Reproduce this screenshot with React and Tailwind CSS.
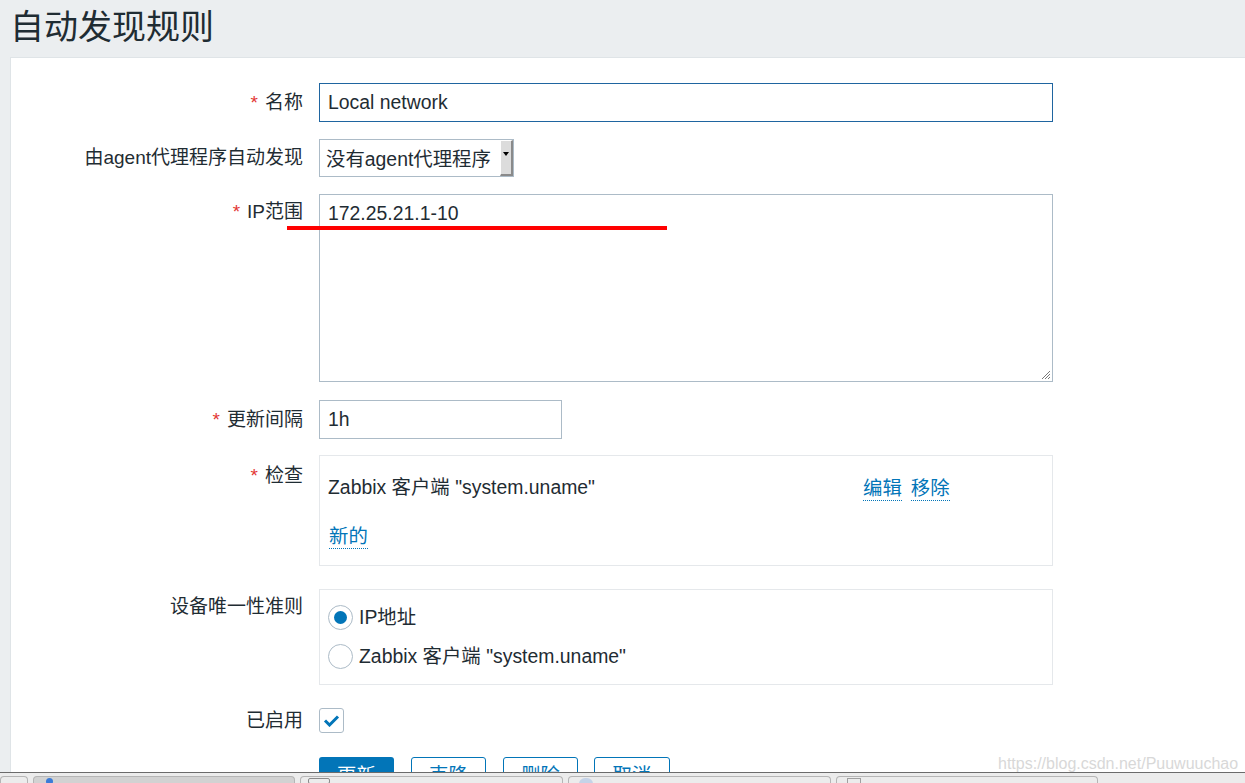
import React from "react";

const FONT = { fontFamily: '"Liberation Sans", "Noto Sans CJK SC", sans-serif' };

function Label({ req, children, className = "" }) {
  return (
    <div className={`w-[292px] shrink-0 text-right text-[19px] leading-[22px] text-[#1f2c33] ${className}`}>
      {req && <span className="text-[#e33734] mr-[7px]">*</span>}
      {children}
    </div>
  );
}

function Link({ children }) {
  return (
    <span className="text-[#0275b8] border-b border-dotted border-[#0275b8] leading-[24px] inline-block">
      {children}
    </span>
  );
}

function Radio({ checked }) {
  return (
    <span className="w-[25px] h-[25px] rounded-full border border-[#acbbc7] bg-white flex items-center justify-center shrink-0">
      {checked && <span className="w-[13px] h-[13px] rounded-full bg-[#0275b8]" />}
    </span>
  );
}

function Tab({ w, active, children }) {
  return (
    <div
      className={`h-[8px] mt-[3px] rounded-t-[4px] border border-b-0 border-[#b5b5b5] ${active ? "bg-[#d2d2d2]" : "bg-[#ececec]"} ${w}`}
    >
      {children}
    </div>
  );
}

export default function App() {
  return (
    <div className="w-[1245px] h-[783px] overflow-hidden flex flex-col bg-[#ebeef0] relative" style={FONT}>
      <div className="h-[772px] overflow-hidden flex flex-col shrink-0">
        <div className="h-[57px] shrink-0 pl-[10px] flex items-start pt-[6px]">
          <h1 className="text-[34px] leading-[42px] text-[#1f2c33] font-normal">自动发现规则</h1>
        </div>
        <div className="ml-[10px] flex-1 bg-white border-l border-t border-[#dfe4e7] pt-[25px] relative text-[19.4px]">
          {/* Name */}
          <div className="flex items-center gap-[16px]">
            <Label req>名称</Label>
            <div className="w-[734px] h-[39px] border border-[#1f65a0] flex items-center pl-[8px] text-[#1f2c33]">
              Local network
            </div>
          </div>

          {/* Proxy */}
          <div className="flex items-center gap-[16px] mt-[17px]">
            <Label>由agent代理程序自动发现</Label>
            <div className="w-[195px] h-[38px] border border-[#acbbc7] flex items-stretch text-[#1f2c33]">
              <div className="flex-1 flex items-center pl-[6px] pt-[4px]">没有agent代理程序</div>
              <div className="w-[13px] h-[36px] bg-[#dcdcdc] border-l border-t border-white border-r-[2px] border-r-[#8a8a8a] border-b-[2px] border-b-[#8a8a8a] flex justify-center pt-[11px]">
                <svg width="6" height="4" viewBox="0 0 6 4">
                  <path d="M0 0 L6 0 L3 4 Z" fill="#000" />
                </svg>
              </div>
            </div>
          </div>

          {/* IP range */}
          <div className="flex items-start gap-[16px] mt-[17px]">
            <Label req className="pt-[7px]">IP范围</Label>
            <div className="w-[734px] h-[188px] border border-[#acbbc7] pl-[8px] pt-[7px] leading-[22px] text-[#1f2c33] relative">
              172.25.21.1-10
              <svg className="absolute right-[1px] bottom-[1px]" width="11" height="11" viewBox="0 0 11 11">
                <path d="M10 2 L2 10 M10 5 L5 10 M10 8 L8 10" stroke="#7a7a7a" strokeWidth="1" />
              </svg>
            </div>
          </div>

          {/* Update interval */}
          <div className="flex items-center gap-[16px] mt-[18px]">
            <Label req>更新间隔</Label>
            <div className="w-[243px] h-[39px] border border-[#acbbc7] flex items-center pl-[8px] text-[#1f2c33]">
              1h
            </div>
          </div>

          {/* Checks */}
          <div className="flex items-start gap-[16px] mt-[16px]">
            <Label req className="pt-[10px]">检查</Label>
            <div className="w-[734px] h-[111px] border border-[#e5e8eb] pl-[8px] pt-[21px] text-[#1f2c33]">
              <div className="flex items-center h-[22px]">
                <span className="w-[535px]">Zabbix 客户端 "system.uname"</span>
                <span className="mt-[2px]"><Link>编辑</Link></span>
                <span className="ml-[9px] mt-[2px]"><Link>移除</Link></span>
              </div>
              <div className="mt-[23px] pl-[1px]">
                <Link>新的</Link>
              </div>
            </div>
          </div>

          {/* Device uniqueness */}
          <div className="flex items-start gap-[16px] mt-[23px]">
            <Label className="pt-[7px]">设备唯一性准则</Label>
            <div className="w-[734px] h-[96px] border border-[#e5e8eb] pl-[8px] pt-[15px] text-[#1f2c33]">
              <div className="flex items-center gap-[6px] h-[25px]">
                <Radio checked />
                <span>IP地址</span>
              </div>
              <div className="flex items-center gap-[6px] h-[25px] mt-[14px]">
                <Radio />
                <span>Zabbix 客户端 "system.uname"</span>
              </div>
            </div>
          </div>

          {/* Enabled */}
          <div className="flex items-center gap-[16px] mt-[23px]">
            <Label>已启用</Label>
            <div className="w-[25px] h-[25px] rounded-[3px] border border-[#acbbc7] flex items-center justify-center">
              <svg width="17" height="13" viewBox="0 0 17 13">
                <path d="M2 6.5 L6.5 11 L15 2.5" stroke="#0275b8" strokeWidth="3" fill="none" />
              </svg>
            </div>
          </div>

          {/* Buttons */}
          <div className="flex items-start mt-[24px] pl-[308px]">
            <div className="w-[75px] h-[38px] rounded-[3px] bg-[#0275b8] text-white flex items-center justify-center">更新</div>
            <div className="w-[75px] h-[38px] rounded-[3px] border border-[#0275b8] text-[#0275b8] flex items-center justify-center ml-[17px]">克隆</div>
            <div className="w-[75px] h-[38px] rounded-[3px] border border-[#0275b8] text-[#0275b8] flex items-center justify-center ml-[17px]">删除</div>
            <div className="w-[76px] h-[38px] rounded-[3px] border border-[#0275b8] text-[#0275b8] flex items-center justify-center ml-[16px]">取消</div>
          </div>
        </div>
      </div>

      {/* Red annotation line */}
      <div className="absolute left-[287px] top-[226px] w-[380px] h-[4px] bg-[#ff0000]" />

      {/* Watermark */}
      <div className="absolute left-[998px] top-[754px] text-[16px] leading-[20px] text-[#d8d8d8]">
        https://blog.csdn.net/Puuwuuchao
      </div>

      {/* Taskbar */}
      <div className="flex-1 border-t border-[#6b6b6b] bg-[#ececec] flex items-start gap-[5px]">
        <Tab w="w-[28px]" />
        <Tab w="w-[262px]" active>
          <div className="ml-[12px] mt-[1px] w-[7px] h-[7px] rounded-full bg-[#3b7bd8]" />
        </Tab>
        <Tab w="w-[263px]">
          <div className="ml-[7px] mt-[1px] w-[22px] h-[6px] border border-[#8a8a8a] rounded-[2px]" />
        </Tab>
        <Tab w="w-[263px]">
          <div className="ml-[10px] mt-[1px] w-[14px] h-[6px] rounded-t-full bg-[#c5d3e8]" />
        </Tab>
        <Tab w="w-[262px]">
          <div className="ml-[10px] mt-[1px] w-[14px] h-[6px] border border-[#a0a0a0]" />
        </Tab>
      </div>
    </div>
  );
}
